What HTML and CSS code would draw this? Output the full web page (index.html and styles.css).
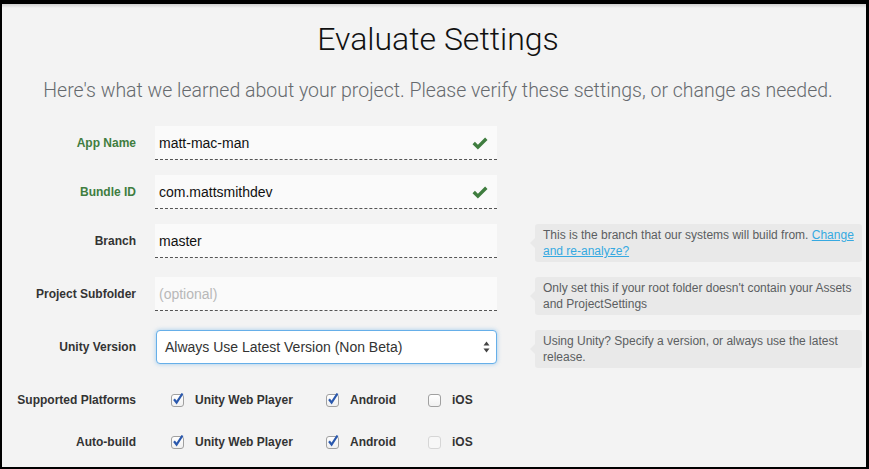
FILE: index.html
```html
<!DOCTYPE html>
<html>
<head>
<meta charset="utf-8">
<link rel="stylesheet" href="styles.css">
</head>
<body>
<div class="frame">
  <h1 class="title">Evaluate Settings</h1>
  <p class="subtitle">Here's what we learned about your project. Please verify these settings, or change as needed.</p>

  <div class="form">
    <div class="row">
      <div class="lbl ok">App Name</div>
      <div class="field"><span class="val">matt-mac-man</span>
        <svg class="tick" width="16" height="13" viewBox="0 0 16 13"><path d="M0.5 7.2 L2.9 4.8 L5.9 7.8 L13.1 0.6 L15.5 3 L5.9 12.6 Z" fill="#3f7d3f"/></svg>
      </div>
      <div></div>
    </div>
    <div class="row">
      <div class="lbl ok">Bundle ID</div>
      <div class="field"><span class="val">com.mattsmithdev</span>
        <svg class="tick" width="16" height="13" viewBox="0 0 16 13"><path d="M0.5 7.2 L2.9 4.8 L5.9 7.8 L13.1 0.6 L15.5 3 L5.9 12.6 Z" fill="#3f7d3f"/></svg>
      </div>
      <div></div>
    </div>
    <div class="row">
      <div class="lbl">Branch</div>
      <div class="field"><span class="val">master</span></div>
      <div class="help">This is the branch that our systems will build from. <a class="link">Change</a> <a class="link">and re-analyze?</a></div>
    </div>
    <div class="row">
      <div class="lbl">Project Subfolder</div>
      <div class="field"><span class="val placeholder">(optional)</span></div>
      <div class="help">Only set this if your root folder doesn't contain your Assets and ProjectSettings</div>
    </div>
    <div class="row">
      <div class="lbl">Unity Version</div>
      <div class="select"><span class="sel-val">Always Use Latest Version (Non Beta)</span>
        <svg class="arrows" width="7" height="12" viewBox="0 0 7 12"><path d="M3.5 0.5 L6.5 4.5 L0.5 4.5 Z M3.5 11.5 L6.5 7.5 L0.5 7.5 Z" fill="#444"/></svg>
      </div>
      <div class="help">Using Unity? Specify a version, or always use the latest release.</div>
    </div>

    <div class="crow">
      <div class="lbl">Supported Platforms</div>
      <div class="checks">
        <div class="chk"><span class="box on"><svg width="14" height="14" viewBox="0 0 14 14"><path d="M3 7.2 L5.6 10.5 L11.5 1.5" fill="none" stroke="#2a58ad" stroke-width="2.2"/></svg></span><span>Unity Web Player</span></div>
        <div class="chk"><span class="box on"><svg width="14" height="14" viewBox="0 0 14 14"><path d="M3 7.2 L5.6 10.5 L11.5 1.5" fill="none" stroke="#2a58ad" stroke-width="2.2"/></svg></span><span>Android</span></div>
        <div class="chk"><span class="box"></span><span>iOS</span></div>
      </div>
    </div>
    <div class="crow">
      <div class="lbl">Auto-build</div>
      <div class="checks">
        <div class="chk"><span class="box on"><svg width="14" height="14" viewBox="0 0 14 14"><path d="M3 7.2 L5.6 10.5 L11.5 1.5" fill="none" stroke="#2a58ad" stroke-width="2.2"/></svg></span><span>Unity Web Player</span></div>
        <div class="chk"><span class="box on"><svg width="14" height="14" viewBox="0 0 14 14"><path d="M3 7.2 L5.6 10.5 L11.5 1.5" fill="none" stroke="#2a58ad" stroke-width="2.2"/></svg></span><span>Android</span></div>
        <div class="chk"><span class="box disabled"></span><span>iOS</span></div>
      </div>
    </div>
  </div>
</div>
</body>
</html>
```

FILE: styles.css
```css
html, body {
  margin: 0;
  padding: 0;
  background: #000;
  height: 469px;
  overflow: hidden;
}
.frame {
  margin: 4px 3px 0 2px;
  height: 463px;
  background: #f3f3f3;
  background-image: linear-gradient(#d0d0d0, #f3f3f3 4px);
  font-family: "Liberation Sans", Arial, sans-serif;
  overflow: hidden;
  padding-top: 15px;
  box-sizing: border-box;
}
.title {
  margin: 0;
  text-align: center;
  font-family: Roboto, "Liberation Sans", sans-serif;
  font-weight: 300;
  font-size: 32px;
  line-height: 40px;
  color: #111;
  padding-left: 8px;
}
.subtitle {
  margin: 20px 0 0;
  text-align: center;
  font-family: Roboto, "Liberation Sans", sans-serif;
  font-weight: 300;
  font-size: 19.5px;
  line-height: 24px;
  color: #666a6e;
  padding-left: 8px;
}
.form {
  margin-top: 23px;
}
.row {
  display: grid;
  grid-template-columns: 134px 361px 1fr;
  align-items: start;
  margin-bottom: 15px;
}
.lbl {
  text-align: right;
  font-weight: bold;
  font-size: 12px;
  line-height: 34px;
  color: #333;
}
.lbl.ok {
  color: #3f7d3f;
}
.field {
  margin-left: 19px;
  height: 34px;
  box-sizing: border-box;
  background: #fafafa;
  border-bottom: 1px dashed #555;
  display: flex;
  align-items: center;
  justify-content: space-between;
  padding: 0 9px 0 4px;
}
.val {
  font-size: 14px;
  color: #111;
}
.placeholder {
  color: #b8b8b8;
}
.tick {
  display: block;
  margin-top: 2px;
}
.select {
  margin-left: 20px;
  height: 34px;
  box-sizing: border-box;
  background: #fff;
  border: 1px solid #66afe9;
  border-radius: 4px;
  box-shadow: 0 0 4px rgba(102, 175, 233, 0.6);
  display: flex;
  align-items: center;
  justify-content: space-between;
  padding: 0 6px 0 8px;
}
.sel-val {
  font-size: 14px;
  color: #333;
}
.arrows {
  display: block;
}
.help {
  position: relative;
  margin: 0 4px 0 38px;
  background: #e9e9e9;
  border-radius: 3px;
  padding: 3px 8px 0;
  height: 38px;
  box-sizing: border-box;
  font-size: 12px;
  line-height: 16px;
  color: #5b5e61;
}
.help::before {
  content: "";
  position: absolute;
  left: -5px;
  top: 14px;
  border-style: solid;
  border-width: 5px 5px 5px 0;
  border-color: transparent #e9e9e9 transparent transparent;
}
.link {
  color: #36a9e1;
  text-decoration: underline;
}
.crow {
  display: grid;
  grid-template-columns: 134px 1fr;
  align-items: center;
  height: 20px;
  margin-top: 22px;
}
.crow .lbl {
  line-height: 20px;
}
.checks {
  margin-left: 35px;
  display: grid;
  grid-template-columns: 155px 102px auto;
  align-items: center;
}
.chk {
  display: flex;
  align-items: center;
  font-weight: bold;
  font-size: 12px;
  color: #333;
}
.box {
  position: relative;
  width: 11px;
  height: 11px;
  border: 1px solid #a0a0a0;
  border-radius: 3px;
  background: linear-gradient(#fff, #f0f0f0);
  margin-right: 11px;
  flex: none;
}
.box svg {
  position: absolute;
  left: -1px;
  top: -3px;
}
.box.disabled {
  border-color: #d6d6d6;
  background: #f7f7f7;
}
```
